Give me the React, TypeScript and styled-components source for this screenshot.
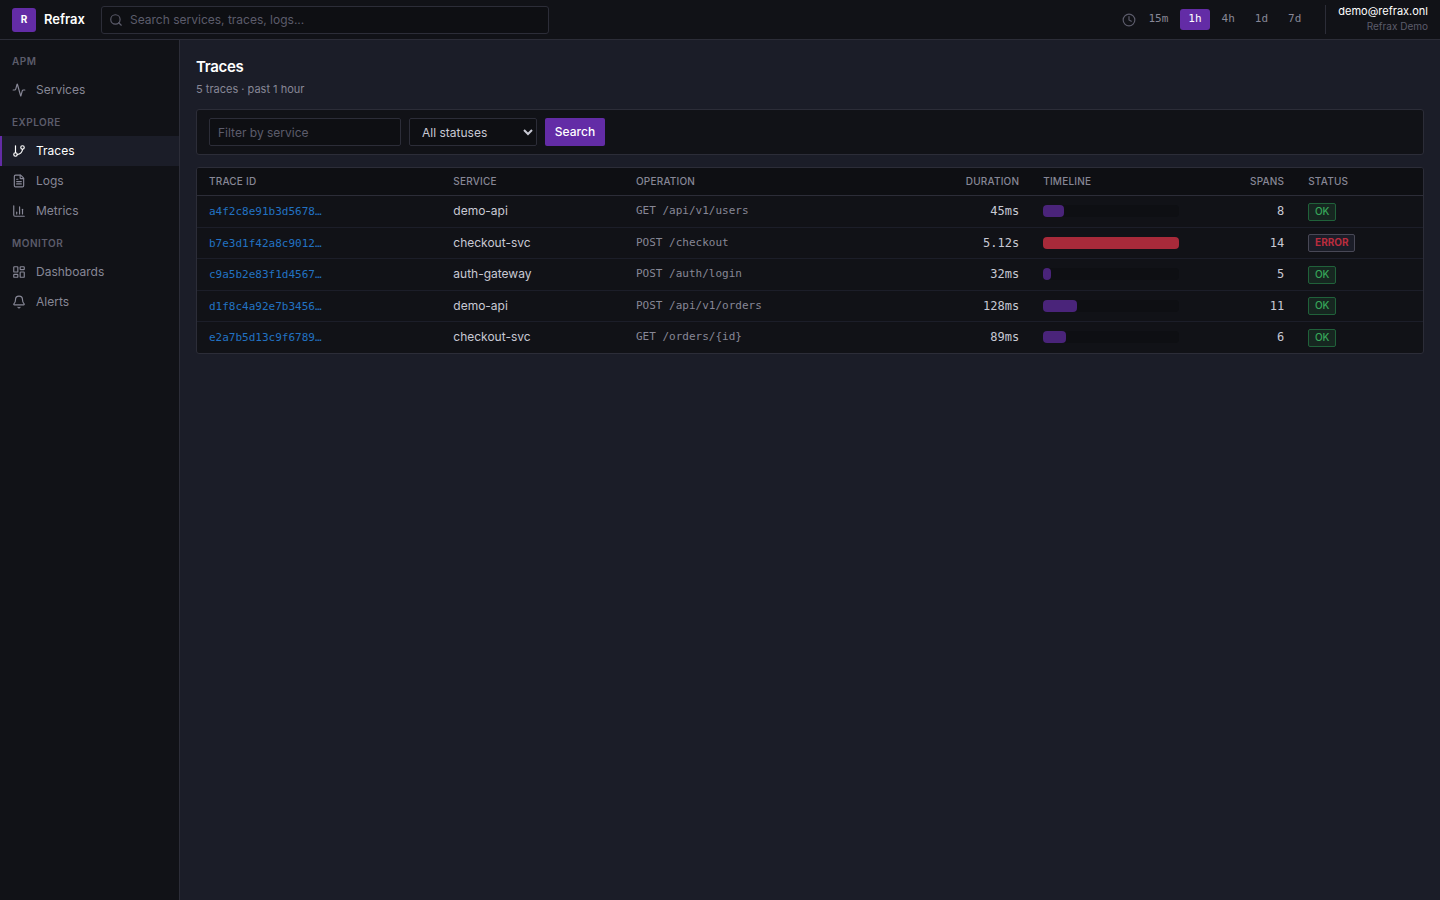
import * as React from 'react';
import styled, { createGlobalStyle, css } from 'styled-components';
import {
  Activity,
  Bell,
  ChartColumn,
  Clock,
  FileText,
  GitBranch,
  LayoutDashboard,
  LucideIcon,
  Search
} from 'lucide-react';

enum Color {
  PANEL = '#111217',
  INPUT = '#0e0f13',
  CANVAS = '#1b1d28',
  BORDER = '#2c2d38',
  ROW_BORDER = '#1c1e29',
  PURPLE = '#632ca6',
  PURPLE_DIM = '#4a247a',
  RED = '#a82a3a',
  RED_TEXT = '#b92c3e',
  GREEN = '#36a65a',
  BLUE = '#2272c3',
  TEXT = '#ffffff',
  BODY = '#c8c9d4',
  MUTED = '#878796',
  FAINT = '#5c5c6b'
}

const SANS = "Inter, 'Liberation Sans', sans-serif";
const MONO = "'DejaVu Sans Mono', monospace";

const GlobalStyle = createGlobalStyle`
  * {
    box-sizing: border-box;
  }

  body {
    margin: 0;
    background: ${Color.CANVAS};
    color: ${Color.BODY};
    font-family: ${SANS};
    font-size: 12px;
    line-height: 1.5;
  }

  button, input, select {
    font-family: inherit;
  }
`;

const Shell = styled.div`
  display: flex;
  flex-direction: column;
  height: 100vh;
  overflow: hidden;
`;

const TopBar = styled.header`
  display: flex;
  align-items: center;
  flex: none;
  height: 40px;
  padding: 0 12px;
  background: ${Color.PANEL};
  border-bottom: 1px solid ${Color.BORDER};
`;

const Logo = styled.div`
  display: flex;
  align-items: center;
  justify-content: center;
  width: 24px;
  height: 24px;
  border-radius: 3px;
  background: ${Color.PURPLE};
  color: ${Color.TEXT};
  font-size: 10px;
  font-weight: 700;
`;

const Brand = styled.div`
  width: 41px;
  margin: 0 16px 0 8px;
  color: ${Color.TEXT};
  font-size: 13px;
  font-weight: 600;
`;

const SearchBox = styled.label`
  display: flex;
  align-items: center;
  gap: 7px;
  width: 448px;
  height: 28px;
  padding: 0 7px;
  border: 1px solid ${Color.BORDER};
  border-radius: 3px;
  background: ${Color.INPUT};
  color: ${Color.FAINT};
`;

const SearchInput = styled.input`
  flex: 1;
  padding: 0;
  border: 0;
  outline: 0;
  background: transparent;
  color: ${Color.BODY};
  font-size: 12px;

  &::placeholder {
    color: ${Color.FAINT};
  }
`;

const TimeRange = styled.div`
  display: flex;
  align-items: center;
  gap: 4px;
  margin-left: auto;
  color: ${Color.FAINT};
`;

const RangeButton = styled.button<{ $active?: boolean }>`
  height: 21px;
  padding: 0 8px 2px;
  border: 0;
  border-radius: 3px;
  background: ${props => (props.$active ? Color.PURPLE : 'transparent')};
  color: ${props => (props.$active ? Color.TEXT : Color.MUTED)};
  font-family: ${MONO};
  font-size: 11px;
`;

const User = styled.div`
  height: 29px;
  margin-left: 16px;
  padding-left: 12px;
  border-left: 1px solid ${Color.BORDER};
  text-align: right;
`;

const UserEmail = styled.div`
  color: ${Color.TEXT};
  font-size: 11px;
  line-height: 13px;
`;

const UserOrg = styled.div`
  color: ${Color.FAINT};
  font-size: 10px;
  line-height: 17px;
`;

const Body = styled.div`
  display: flex;
  flex: 1;
  min-height: 0;
`;

const Sidebar = styled.nav`
  flex: none;
  width: 180px;
  padding-top: 4px;
  background: ${Color.PANEL};
  border-right: 1px solid ${Color.BORDER};
`;

const NavHeading = styled.div`
  padding: 10px 12px 6px;
  color: ${Color.FAINT};
  font-size: 10px;
  font-weight: 600;
  letter-spacing: 0.5px;
  line-height: 15px;
`;

const NavItem = styled.a<{ $active?: boolean }>`
  display: flex;
  align-items: center;
  gap: 10px;
  height: 30px;
  padding-left: 10px;
  border-left: 2px solid transparent;
  color: ${Color.MUTED};

  ${props =>
    props.$active &&
    css`
      border-left-color: ${Color.PURPLE};
      background: ${Color.CANVAS};
      color: ${Color.TEXT};
    `}
`;

const Main = styled.main`
  flex: 1;
  padding: 16px;
`;

const Title = styled.h1`
  margin: 0;
  color: ${Color.TEXT};
  font-size: 15px;
  font-weight: 600;
  letter-spacing: -0.02em;
  line-height: 22px;
`;

const Subtitle = styled.p`
  margin: 3px 0 11px;
  color: ${Color.MUTED};
  font-size: 11px;
  line-height: 17px;
`;

const Panel = styled.section`
  border: 1px solid ${Color.BORDER};
  border-radius: 3px;
  background: ${Color.PANEL};
  overflow: hidden;
`;

const FilterBar = styled(Panel)`
  display: flex;
  gap: 8px;
  height: 46px;
  margin-bottom: 12px;
  padding: 8px 12px;
`;

const control = css`
  height: 28px;
  border: 1px solid ${Color.BORDER};
  border-radius: 2px;
  background: ${Color.INPUT};
  color: ${Color.BODY};
  font-size: 12px;
`;

const FilterInput = styled.input`
  ${control}
  width: 192px;
  padding: 0 8px;

  &::placeholder {
    color: ${Color.FAINT};
  }
`;

const FilterSelect = styled.select`
  ${control}
  width: 128px;
  padding: 0 8px;
`;

const SearchButton = styled.button`
  width: 60px;
  height: 28px;
  padding: 0 0 2px;
  border: 0;
  border-radius: 2px;
  background: ${Color.PURPLE};
  color: ${Color.TEXT};
  font-size: 12px;
  font-weight: 500;
`;

const Table = styled.table`
  width: 100%;
  table-layout: fixed;
  border-spacing: 0;
`;

const Th = styled.th<{ $w?: number; $right?: boolean }>`
  width: ${props => (props.$w ? `${props.$w}px` : 'auto')};
  height: 28px;
  padding: 0 12px;
  border-bottom: 1px solid ${Color.BORDER};
  background: ${Color.INPUT};
  color: ${Color.MUTED};
  font-size: 10px;
  font-weight: 500;
  letter-spacing: 0.2px;
  text-align: ${props => (props.$right ? 'right' : 'left')};
`;

const Td = styled.td`
  height: 31.5px;
  padding: 0 12px;
  border-bottom: 1px solid ${Color.ROW_BORDER};

  tr:last-child > & {
    height: 30.5px;
    border-bottom: 0;
  }
`;

const NumberTd = styled(Td)`
  font-family: ${MONO};
  text-align: right;
`;

const OperationTd = styled(Td)`
  color: ${Color.MUTED};
  font-family: ${MONO};
  font-size: 11px;
`;

const TraceLink = styled.a`
  color: ${Color.BLUE};
  font-family: ${MONO};
  font-size: 11px;
`;

const Track = styled.div`
  width: 136px;
  height: 12px;
  border-radius: 4px;
  background: ${Color.INPUT};
`;

const Bar = styled.div<{ $error: boolean }>`
  height: 12px;
  border-radius: 4px;
  background: ${props => (props.$error ? Color.RED : Color.PURPLE_DIM)};
`;

const Badge = styled.span<{ $error: boolean }>`
  display: block;
  width: fit-content;
  height: 18px;
  margin-top: 1px;
  padding: 0 ${props => (props.$error ? 5.9 : 5.7)}px;
  border: 1px solid ${props => (props.$error ? '#484856' : '#20613a')};
  border-radius: 2px;
  background: ${props => (props.$error ? Color.CANVAS : '#162620')};
  color: ${props => (props.$error ? Color.RED_TEXT : Color.GREEN)};
  font-size: 10px;
  font-weight: ${props => (props.$error ? 700 : 500)};
  line-height: 15.5px;
`;

interface NavLink {
  label: string;
  icon: LucideIcon;
}

const NAV: { heading: string; links: NavLink[] }[] = [
  { heading: 'APM', links: [{ label: 'Services', icon: Activity }] },
  {
    heading: 'EXPLORE',
    links: [
      { label: 'Traces', icon: GitBranch },
      { label: 'Logs', icon: FileText },
      { label: 'Metrics', icon: ChartColumn }
    ]
  },
  {
    heading: 'MONITOR',
    links: [
      { label: 'Dashboards', icon: LayoutDashboard },
      { label: 'Alerts', icon: Bell }
    ]
  }
];

const RANGES = ['15m', '1h', '4h', '1d', '7d'];

interface Trace {
  id: string;
  service: string;
  operation: string;
  duration: string;
  // Bar length in percent of the track
  share: number;
  spans: number;
  status: 'OK' | 'ERROR';
}

const TRACES: Trace[] = [
  { id: 'a4f2c8e91b3d5678', service: 'demo-api', operation: 'GET /api/v1/users', duration: '45ms', share: 15.4, spans: 8, status: 'OK' },
  { id: 'b7e3d1f42a8c9012', service: 'checkout-svc', operation: 'POST /checkout', duration: '5.12s', share: 100, spans: 14, status: 'ERROR' },
  { id: 'c9a5b2e83f1d4567', service: 'auth-gateway', operation: 'POST /auth/login', duration: '32ms', share: 6, spans: 5, status: 'OK' },
  { id: 'd1f8c4a92e7b3456', service: 'demo-api', operation: 'POST /api/v1/orders', duration: '128ms', share: 25, spans: 11, status: 'OK' },
  { id: 'e2a7b5d13c9f6789', service: 'checkout-svc', operation: 'GET /orders/{id}', duration: '89ms', share: 17, spans: 6, status: 'OK' }
];

const App = () => (
  <Shell>
    <GlobalStyle />
    <TopBar>
      <Logo>R</Logo>
      <Brand>Refrax</Brand>
      <SearchBox>
        <Search size={14} />
        <SearchInput placeholder="Search services, traces, logs..." />
      </SearchBox>
      <TimeRange>
        <Clock size={14} />
        {RANGES.map(range => (
          <RangeButton key={range} $active={range === '1h'}>
            {range}
          </RangeButton>
        ))}
      </TimeRange>
      <User>
        <UserEmail>demo@refrax.onl</UserEmail>
        <UserOrg>Refrax Demo</UserOrg>
      </User>
    </TopBar>

    <Body>
      <Sidebar>
        {NAV.map(group => (
          <React.Fragment key={group.heading}>
            <NavHeading>{group.heading}</NavHeading>
            {group.links.map(({ label, icon: Icon }) => (
              <NavItem key={label} $active={label === 'Traces'}>
                <Icon size={14} />
                {label}
              </NavItem>
            ))}
          </React.Fragment>
        ))}
      </Sidebar>

      <Main>
        <Title>Traces</Title>
        <Subtitle>5 traces · past 1 hour</Subtitle>

        <FilterBar>
          <FilterInput placeholder="Filter by service" />
          <FilterSelect>
            <option>All statuses</option>
            <option>OK</option>
            <option>Error</option>
          </FilterSelect>
          <SearchButton>Search</SearchButton>
        </FilterBar>

        <Panel>
          <Table>
            <thead>
              <tr>
                <Th $w={244.3}>TRACE ID</Th>
                <Th $w={182.7}>SERVICE</Th>
                <Th>OPERATION</Th>
                <Th $w={122} $right>
                  DURATION
                </Th>
                <Th $w={183}>TIMELINE</Th>
                <Th $w={82} $right>
                  SPANS
                </Th>
                <Th $w={126.8}>STATUS</Th>
              </tr>
            </thead>
            <tbody>
              {TRACES.map(trace => (
                <tr key={trace.id}>
                  <Td>
                    <TraceLink>{trace.id}…</TraceLink>
                  </Td>
                  <Td>{trace.service}</Td>
                  <OperationTd>{trace.operation}</OperationTd>
                  <NumberTd>{trace.duration}</NumberTd>
                  <Td>
                    <Track>
                      <Bar
                        $error={trace.status === 'ERROR'}
                        style={{ width: `${trace.share}%` }}
                      />
                    </Track>
                  </Td>
                  <NumberTd>{trace.spans}</NumberTd>
                  <Td>
                    <Badge $error={trace.status === 'ERROR'}>
                      {trace.status}
                    </Badge>
                  </Td>
                </tr>
              ))}
            </tbody>
          </Table>
        </Panel>
      </Main>
    </Body>
  </Shell>
);

export default App;
